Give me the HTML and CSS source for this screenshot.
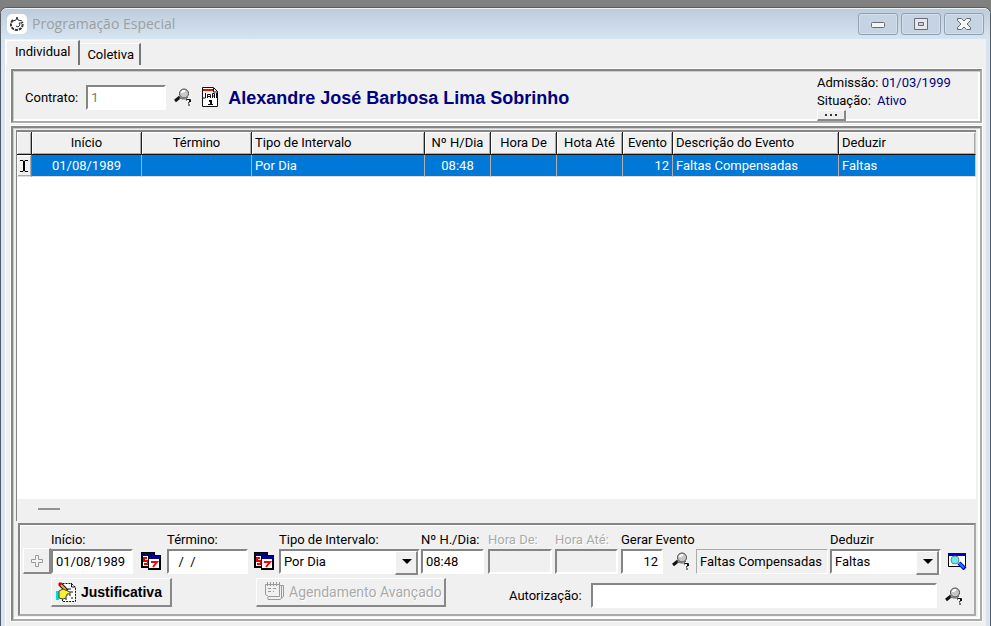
FILE: index.html
```html
<!DOCTYPE html>
<html lang="pt-BR">
<head>
<meta charset="utf-8">
<title>Programação Especial</title>
<link rel="stylesheet" href="styles.css">
</head>
<body>
<svg class="defs" aria-hidden="true">
  <symbol id="lookup" viewBox="0 0 18 18">
    <path d="M1 13l5-4" fill="none" stroke="#111" stroke-width="3"/>
    <path d="M5 10l4 1h3l2-2" fill="none" stroke="#666"/>
    <circle cx="10" cy="5.500" r="4.500" fill="#c8c8c8" stroke="#444"/>
    <path d="M8 5q0-2 3-2" fill="none" stroke="#fff" stroke-width="2"/>
    <path d="M12.500 12.500v-1h4v2l-2 1v1M14 17h2" fill="none" stroke="#111"/>
    <path d="M16 12v2" stroke="#111" stroke-width="2"/>
  </symbol>
  <symbol id="dates" viewBox="0 0 20 18">
    <path d="M0 0h14v16H0z" fill="#000"/><path d="M2 4h11v10H2z" fill="#fff"/><path d="M1 1h12v3H1z" fill="#000080"/>
    <path d="M6 6H3v3h4v3H3" fill="none" stroke="#e00" stroke-width="2"/>
    <path d="M7 3h13v15H7z" fill="#000"/><path d="M8 7h10v9H8z" fill="#fff"/><path d="M8 4h11v3H8z" fill="#0000a0"/>
    <path d="M10 10h6l-4 5" fill="none" stroke="#f00" stroke-width="2"/>
  </symbol>
</svg>
<main class="window">
  <header class="titlebar">
    <svg class="app-icon" viewBox="0 0 20 20"><rect width="20" height="20" rx="5" fill="#fff"/><path d="M6 6C2 10 4 15 9 16c5 0 8-4 6-8" fill="none" stroke="#333" stroke-width="2" stroke-dasharray="3 1"/><path d="M6 7l3-1 1-3 1 3 4 1M9 12l2 1 2-2-1-2h3" fill="none" stroke="#333"/></svg>
    <h1>Programação Especial</h1>
    <div class="window-buttons">
      <button aria-label="Minimizar"><svg viewBox="0 0 16 14"><rect x="1.500" y="5.500" width="13" height="5" rx="1" fill="#f5f5f5" stroke="#686c78"/></svg></button>
      <button aria-label="Maximizar"><svg viewBox="0 0 16 14"><path d="M1.500 1.500h13v11h-13z" fill="#e8e8ec" stroke="#686c78"/><path d="M5.500 5.500h5v3h-5z" fill="#c7d3e2" stroke="#686c78"/></svg></button>
      <button aria-label="Fechar"><svg viewBox="0 0 16 14"><path d="M1.500 1.500h4L8 4l2.500-2.500h4v2L11 7l3.500 3.500v2h-4L8 10l-2.500 2.500h-4v-2L5 7 1.500 3.500z" fill="#f5f5f5" stroke="#686c78"/></svg></button>
    </div>
  </header>
  <div class="client">
    <nav class="tabs">
      <button class="tab active">Individual</button>
      <button class="tab">Coletiva</button>
    </nav>
    <section class="panel contract">
      <label for="contrato">Contrato:</label>
      <input id="contrato" value="1" disabled>
      <button class="icon-button" aria-label="Pesquisar contrato"><svg class="icon"><use href="#lookup"/></svg></button>
      <button class="icon-button sheet" aria-label="Calendário"><svg class="icon" viewBox="0 0 18 20"><path d="M1.500.500h11l4 4v15h-15z" fill="#fff" stroke="#111"/><path d="M12.500 1v4h4" fill="none" stroke="#111"/><path d="M2 3h10" stroke="#f00" stroke-width="2"/><path d="M4.500 6v5H2M6.500 11V7.500h3V11M6 9.500h3M11.500 11V6.500h2V9h-2M13.500 9v2M15.500 6v5" fill="none" stroke="#111"/><path d="M8 14h2v3" fill="none" stroke="#111" stroke-width="2"/><path d="M7 17.500h5" stroke="#111"/></svg></button>
      <strong class="person">Alexandre José Barbosa Lima Sobrinho</strong>
      <div class="status">
        <div>Admissão: <span>01/03/1999</span></div>
        <div>Situação: <span class="situation">Ativo</span></div>
        <button class="more" aria-label="Mais"><i></i><i></i><i></i></button>
      </div>
    </section>
    <section class="panel body">
      <div class="listing">
        <table>
          <colgroup><col class="c-mark"><col class="c-date"><col class="c-date"><col class="c-type"><col class="c-hour"><col class="c-hour"><col class="c-hour"><col class="c-event"><col class="c-desc"><col></colgroup>
          <thead><tr><th></th><th class="center">Início</th><th class="center">Término</th><th>Tipo de Intervalo</th><th class="center">Nº H/Dia</th><th class="center">Hora De</th><th class="center">Hota Até</th><th class="center">Evento</th><th>Descrição do Evento</th><th>Deduzir</th></tr></thead>
          <tbody><tr><td class="mark"><svg viewBox="0 0 10 14"><path d="M1 1.500h3l1 1 1-1h3M1 12.500h3l1-1 1 1h3" fill="none" stroke="#000"/><path d="M5 2v10" stroke="#000" stroke-width="2"/></svg></td><td class="center">01/08/1989</td><td></td><td>Por Dia</td><td class="center">08:48</td><td></td><td></td><td class="right">12</td><td>Faltas Compensadas</td><td>Faltas</td></tr></tbody>
        </table>
        <div class="scroll"><span></span></div>
      </div>
      <form class="editor">
        <div class="fields">
          <button type="button" class="raised add" aria-label="Adicionar" disabled><svg viewBox="0 0 12 12"><path d="M4.500.500h3v4h4v3h-4v4h-3v-4h-4v-3h4z" fill="#f4f4f4" stroke="#999"/></svg></button>
          <div class="field"><label for="inicio">Início:</label><input id="inicio" value="01/08/1989"></div>
          <button type="button" class="icon-button dates" aria-label="Data inicial"><svg class="icon"><use href="#dates"/></svg></button>
          <div class="field"><label for="termino">Término:</label><input id="termino" value="  /  /"></div>
          <button type="button" class="icon-button dates" aria-label="Data final"><svg class="icon"><use href="#dates"/></svg></button>
          <div class="field"><label for="tipo">Tipo de Intervalo:</label><div class="combo"><select id="tipo"><option>Por Dia</option></select></div></div>
          <div class="field"><label for="horas">Nº H./Dia:</label><input id="horas" class="short" value="08:48"></div>
          <div class="field off"><label for="de">Hora De:</label><input id="de" disabled></div>
          <div class="field off"><label for="ate">Hora Até:</label><input id="ate" disabled></div>
          <div class="field"><label for="evento">Gerar Evento</label><input id="evento" class="right" value="12"></div>
          <button type="button" class="icon-button" aria-label="Pesquisar evento"><svg class="icon"><use href="#lookup"/></svg></button>
          <output class="readout" for="evento">Faltas Compensadas</output>
          <div class="field"><label for="deduzir">Deduzir</label><div class="combo"><select id="deduzir"><option>Faltas</option></select></div></div>
          <button type="button" class="icon-button dates" aria-label="Visualizar"><svg class="icon" viewBox="0 0 20 18"><path d="M1.500 1.500h17v13h-17z" fill="#fff" stroke="#000"/><path d="M1 1h18v3H1z" fill="#0000c0"/><circle cx="8" cy="8" r="4" fill="#6ee" stroke="#689"/><path d="M12 11l6 6" stroke="#0000c0" stroke-width="4"/><path d="M12 11l5 5" stroke="#08f" stroke-width="2"/></svg></button>
        </div>
        <div class="actions">
          <button type="button" class="raised reason"><svg viewBox="0 0 20 20"><path d="M6.500 1.500h9l4 4v14h-13z" fill="#fff" stroke="#111" stroke-dasharray="2 1"/><path d="M15.500 1v4h4M12 7h3M14 10h3M13 13h2M15 16h2M9 17h2" fill="none" stroke="#111"/><path d="M0 9h3v9H0z" fill="#0dd"/><path d="M4 2l7 7" stroke="#111" stroke-width="4"/><path d="M4 2l6 6" stroke="#fa3" stroke-width="2"/><path d="M3 1l2 2" stroke="#d00" stroke-width="3"/><path d="M3 9l4-2 7 3v2h-3v2h-1v2l-3 1-4-1z" fill="#fe3" stroke="#443"/></svg>Justificativa</button>
          <button type="button" class="raised schedule" disabled><svg viewBox="0 0 20 20"><path d="M1.500 2.500h14v12h-11l-3-2zM4 15v2.500h12l3.500-3V3.500H16M17.500 4v12M4 6.500h3M9 6.500h3M4 9.500h3M9 9.500h1M3.500 0v4M6.500 0v4M9.500 0v4M12.500 0v4M15.500 0v4" fill="none" stroke="#999"/></svg>Agendamento Avançado</button>
          <label for="autorizacao">Autorização:</label>
          <input id="autorizacao">
          <button type="button" class="icon-button" aria-label="Pesquisar autorização"><svg class="icon"><use href="#lookup"/></svg></button>
        </div>
      </form>
    </section>
  </div>
</main>
</body>
</html>
```
FILE: styles.css
```css
* { box-sizing: border-box; }
body {
  margin: 0;
  padding-top: 7px;
  min-height: 100vh;
  display: flex;
  background: #808080;
  font: 13px/18px Roboto, "Liberation Sans", sans-serif;
  color: #000;
}
button, input, select { font: inherit; color: inherit; border-radius: 0; margin: 0; }
.defs { position: absolute; width: 0; height: 0; }
.window {
  flex: 1;
  min-width: 0;
  display: flex;
  flex-direction: column;
  border: 1px solid #555b64;
  border-bottom: 0;
  border-radius: 7px 7px 0 0;
  background: #d7e4f2;
  padding: 0 4px;
}
.titlebar {
  flex: none;
  height: 31px;
  display: flex;
  align-items: center;
  margin: 0 -4px;
  padding: 0 6px;
  border-top: 1px solid #edf2f7;
  border-radius: 6px 6px 0 0;
  background: linear-gradient(#bdccdb, #d7e4f2);
}
.app-icon { width: 20px; height: 20px; }
h1 { margin: 0 0 0 5px; font: 14px/20px "Open Sans", sans-serif; color: #9c9fa4; }
.window-buttons { display: flex; gap: 3px; margin-left: auto; }
.window-buttons button {
  width: 40px;
  height: 22px;
  padding: 0;
  border: 1px solid #929fb2;
  border-radius: 3px;
  background: #c5d3e3;
  box-shadow: inset 0 0 0 1px #d5e0ec;
}
.window-buttons svg { display: block; width: 16px; height: 14px; margin: auto; }
.client {
  flex: 1;
  min-height: 0;
  display: flex;
  flex-direction: column;
  padding: 1px 4px 5px 5px;
  background: #f0f0f0;
  border-left: 1px solid #fff;
}
.tabs { flex: none; display: flex; align-items: flex-end; height: 25px; margin-left: -5px; }
.tab {
  height: 22px;
  padding: 0 5px 0 7px;
  border: 0;
  border-top: 1px solid #fff;
  border-right: 2px solid #777;
  background: #f0f0f0;
}
.tab.active { height: 25px; padding: 0 8px 3px; border-left: 1px solid #fff; }
.panel { border: 2px solid #858585; border-right-color: #aaa; border-bottom-color: #aaa; outline: 1px solid #fff; }
.contract {
  flex: none;
  height: 54px;
  margin-top: 4px;
  display: flex;
  align-items: center;
  padding-left: 12px;
  box-shadow: inset 1px 1px #ccc, inset -2px -2px #fff;
}
.contract label { padding-top: 4px; }
input {
  height: 25px;
  padding: 0 3px;
  border: 2px solid #858585;
  border-right-color: #fff;
  border-bottom-color: #fff;
  background: #fff;
}
.contract input { width: 80px; margin: 2px 0 0 8px; color: #777; }
.icon-button { padding: 0; border: 0; background: none; }
.icon { display: block; width: 18px; height: 18px; }
.contract .icon-button { margin: 2px 0 0 8px; }
.contract .sheet { margin-left: 9px; }
.sheet .icon { height: 20px; }
.person { margin-left: 9px; padding-top: 4px; font: bold 18px/22px "Liberation Sans", sans-serif; color: #000080; white-space: nowrap; }
.status { width: 163px; margin-left: auto; white-space: nowrap; align-self: flex-start; padding-top: 3px; }
.status span { color: #000080; }
.status .situation { margin-left: 3px; }
.more {
  display: flex;
  justify-content: center;
  align-items: center;
  gap: 3px;
  width: 29px;
  height: 11px;
  padding: 0;
  border: 1px solid #fff;
  border-right: 2px solid #888;
  border-bottom: 2px solid #888;
  background: #eee;
}
.more i { width: 2px; height: 2px; background: #333; }
.body {
  flex: 1;
  min-height: 0;
  display: flex;
  flex-direction: column;
  margin-top: 3px;
  padding: 2px 4px 3px 3px;
  box-shadow: inset 1px 1px #ccc, inset -2px -2px #fff;
}
.listing { flex: 1; display: flex; flex-direction: column; background: #fff; border: 1px solid #858585; border-width: 2px 0 0 1px; }
table { width: 100%; table-layout: fixed; border-collapse: separate; border-spacing: 0; }
.c-mark { width: 15px; }
.c-date { width: 110px; }
.c-type { width: 173px; }
.c-hour { width: 66px; }
.c-event { width: 50px; }
.c-desc { width: 166px; }
th, td { padding: 0 3px; text-align: left; font-weight: normal; white-space: nowrap; height: 22px; }
th { background: #f0f0f0; border-right: 1px solid #222; border-bottom: 1px solid #111; box-shadow: inset 1px 1px #fff, inset -1px -1px #aaa; height: 23px; }
td { background: #0078d7; color: #fff; border-right: 1px solid #b0b0b0; border-bottom: 1px solid #ddd; }
th:last-child, td:last-child { border-right-color: #ccc; }
.center { text-align: center; }
.right { text-align: right; }
td.mark { padding: 0 2px; background: #f0f0f0; border-right-color: #777; box-shadow: inset 1px 1px #fff, inset -1px -1px #aaa; }
.mark svg { display: block; width: 10px; height: 14px; }
.scroll { margin-top: auto; height: 22px; padding: 9px 21px; background: #f0f0f0; }
.scroll span { display: block; width: 22px; height: 2px; background: #929292; }
.editor {
  flex: none;
  margin: 2px 0 0 2px;
  height: 93px;
  padding: 6px 2px 0 3px;
  border: 2px solid #858585;
  border-right-color: #aaa;
  border-bottom-color: #aaa;
  box-shadow: inset 1px 1px #fff;
}
.fields {
  display: grid;
  grid-template-columns: 28px 83px 33px 82px 30px 142px 67px 67px 66px 44px 31px 1fr 112px 30px;
  align-items: end;
  white-space: nowrap;
}
.field { display: flex; flex-direction: column; min-width: 0; }
.field input { width: calc(100% - 1px); }
.field .short { width: calc(100% - 4px); }
.off { color: #aaa; text-shadow: 1px 1px #fff; }
.off input { width: calc(100% - 3px); background: #f0f0f0; }
.field .right { width: calc(100% - 2px); }
.raised {
  border: 1px solid #fff;
  border-right: 2px solid #888;
  border-bottom: 2px solid #888;
  background: #f0f0f0;
}
.add { width: 28px; height: 26px; padding: 0; }
.add svg { display: block; width: 12px; height: 12px; margin: auto; }
.fields .icon-button { justify-self: center; margin-bottom: 4px; }
.dates .icon { width: 20px; }
.combo { position: relative; width: calc(100% - 1px); }
select {
  appearance: none;
  width: 100%;
  height: 25px;
  padding: 0 3px;
  border: 2px solid #858585;
  border-right-color: #fff;
  border-bottom-color: #fff;
  background: #fff;
  display: block;
}
.combo::before {
  content: "";
  position: absolute;
  top: 2px;
  right: 2px;
  width: 20px;
  height: 21px;
  background: #f0f0f0;
  border: 1px solid #fff;
  border-right: 2px solid #888;
  border-bottom: 2px solid #888;
  pointer-events: none;
}
.combo::after {
  content: "";
  position: absolute;
  top: 10px;
  right: 8px;
  border: 5px solid transparent;
  border-top-color: #000;
  border-bottom: 0;
  pointer-events: none;
}
.readout { height: 25px; padding: 3px 3px 0; margin-right: 2px; border: 1px solid #aaa; border-right-color: #fff; border-bottom-color: #fff; overflow: hidden; }
.actions { display: flex; align-items: center; padding: 3px 0 0 28px; }
.actions .raised { height: 29px; display: flex; align-items: center; white-space: nowrap; }
.actions svg { width: 20px; height: 20px; flex: none; }
.reason { width: 121px; padding: 0 4px; gap: 5px; font: bold 14px/18px "Liberation Sans", sans-serif; }
.schedule { width: 190px; margin-left: 84px; padding: 0 7px; gap: 5px; color: #aaa; font-size: 14px; text-shadow: 1px 1px #fff; }
.actions label { margin-left: 63px; padding-top: 6px; }
.actions input { flex: 1; min-width: 0; margin: 6px 0 0 9px; }
.actions .icon-button { margin: 6px 9px 0 8px; }
.actions .icon-button .icon { width: 18px; height: 18px; }
```
